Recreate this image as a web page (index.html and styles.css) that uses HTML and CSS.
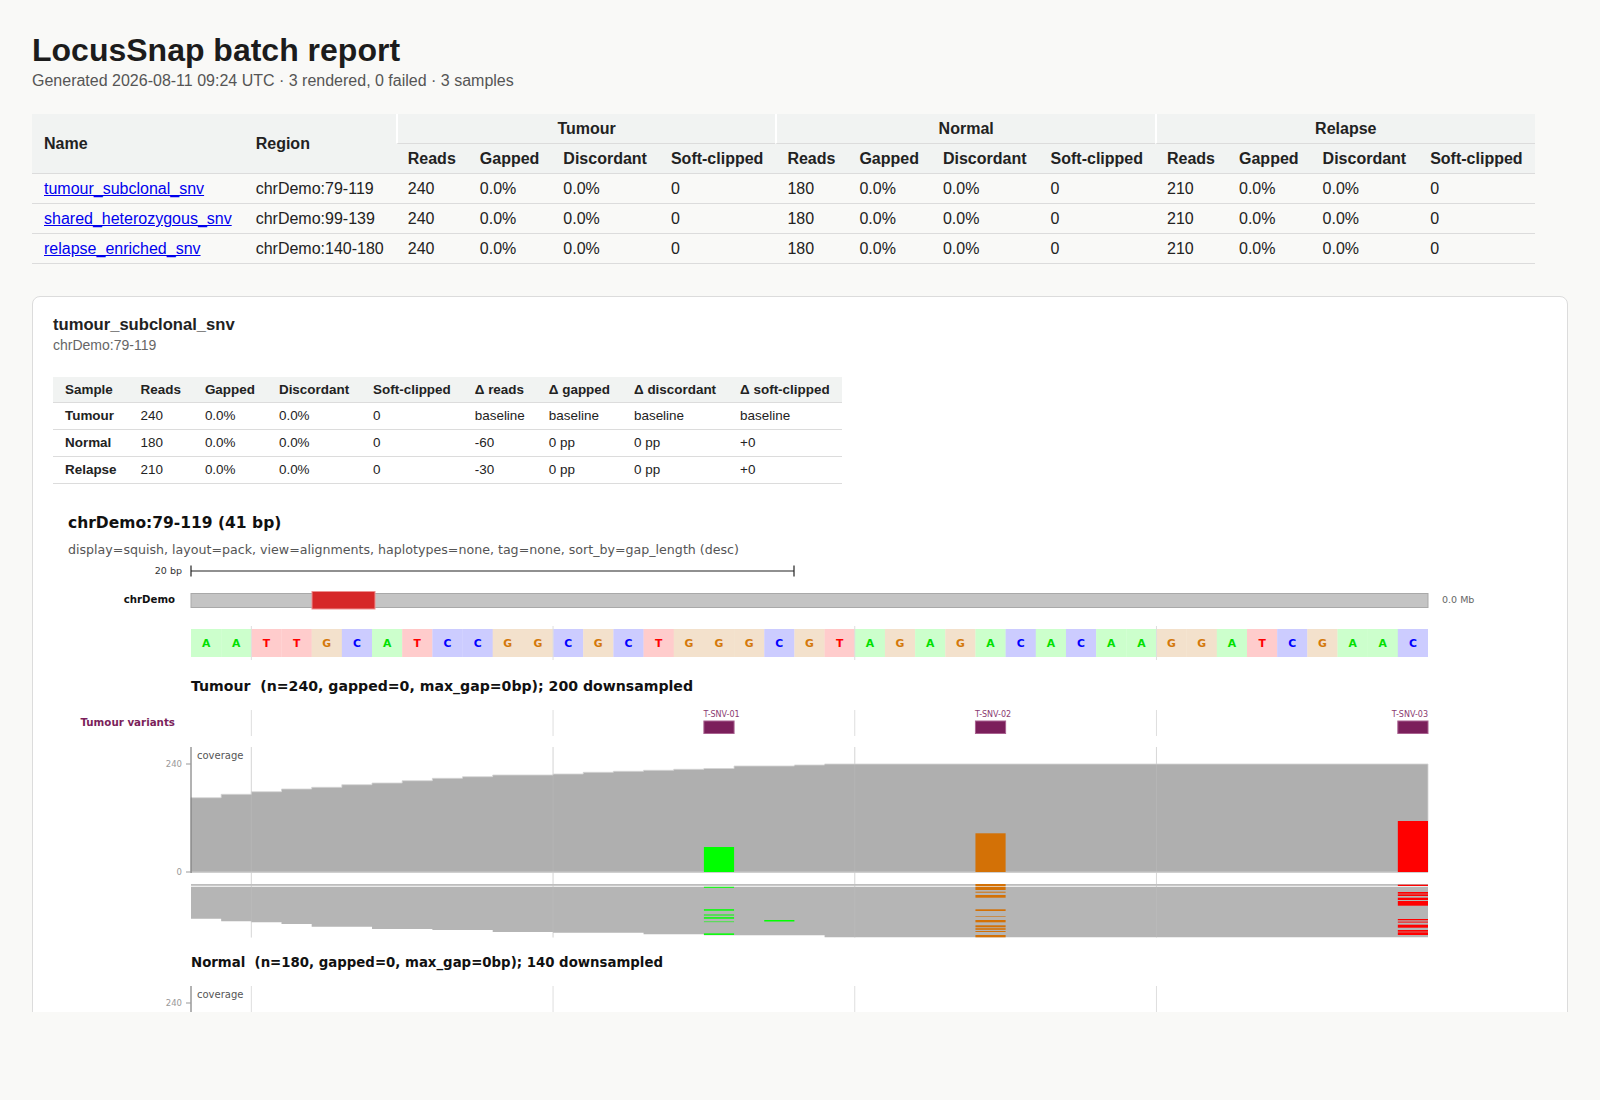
FILE: index.html
```html
<!DOCTYPE html>
<html lang="en">
<head>
<meta charset="utf-8">
<title>LocusSnap batch report</title>
<link rel="stylesheet" href="styles.css">
</head>
<body>
<div class="page">
  <h1>LocusSnap batch report</h1>
  <p class="meta">Generated 2026-08-11 09:24 UTC · 3 rendered, 0 failed · 3 samples</p>

  <table class="summary">
    <thead>
      <tr>
        <th rowspan="2">Name</th>
        <th rowspan="2">Region</th>
        <th colspan="4" class="grp">Tumour</th>
        <th colspan="4" class="grp">Normal</th>
        <th colspan="4" class="grp">Relapse</th>
      </tr>
      <tr>
        <th>Reads</th><th>Gapped</th><th>Discordant</th><th>Soft-clipped</th>
        <th>Reads</th><th>Gapped</th><th>Discordant</th><th>Soft-clipped</th>
        <th>Reads</th><th>Gapped</th><th>Discordant</th><th>Soft-clipped</th>
      </tr>
    </thead>
    <tbody>
      <tr>
        <td><a href="#tumour_subclonal_snv">tumour_subclonal_snv</a></td><td>chrDemo:79-119</td>
        <td>240</td><td>0.0%</td><td>0.0%</td><td>0</td>
        <td>180</td><td>0.0%</td><td>0.0%</td><td>0</td>
        <td>210</td><td>0.0%</td><td>0.0%</td><td>0</td>
      </tr>
      <tr>
        <td><a href="#shared_heterozygous_snv">shared_heterozygous_snv</a></td><td>chrDemo:99-139</td>
        <td>240</td><td>0.0%</td><td>0.0%</td><td>0</td>
        <td>180</td><td>0.0%</td><td>0.0%</td><td>0</td>
        <td>210</td><td>0.0%</td><td>0.0%</td><td>0</td>
      </tr>
      <tr>
        <td><a href="#relapse_enriched_snv">relapse_enriched_snv</a></td><td>chrDemo:140-180</td>
        <td>240</td><td>0.0%</td><td>0.0%</td><td>0</td>
        <td>180</td><td>0.0%</td><td>0.0%</td><td>0</td>
        <td>210</td><td>0.0%</td><td>0.0%</td><td>0</td>
      </tr>
    </tbody>
  </table>

  <section class="card" id="tumour_subclonal_snv">
    <h2>tumour_subclonal_snv</h2>
    <p class="region">chrDemo:79-119</p>

    <table class="cmp">
      <thead>
        <tr>
          <th>Sample</th><th>Reads</th><th>Gapped</th><th>Discordant</th><th>Soft-clipped</th>
          <th>Δ reads</th><th>Δ gapped</th><th>Δ discordant</th><th>Δ soft-clipped</th>
        </tr>
      </thead>
      <tbody>
        <tr><td class="s">Tumour</td><td>240</td><td>0.0%</td><td>0.0%</td><td>0</td><td>baseline</td><td>baseline</td><td>baseline</td><td>baseline</td></tr>
        <tr><td class="s">Normal</td><td>180</td><td>0.0%</td><td>0.0%</td><td>0</td><td>-60</td><td>0 pp</td><td>0 pp</td><td>+0</td></tr>
        <tr><td class="s">Relapse</td><td>210</td><td>0.0%</td><td>0.0%</td><td>0</td><td>-30</td><td>0 pp</td><td>0 pp</td><td>+0</td></tr>
      </tbody>
    </table>

    <svg class="locus" viewBox="53 497 1494 560" width="1494" height="560" xmlns="http://www.w3.org/2000/svg">
      <text class="t-title" x="68" y="527.5">chrDemo:79-119 (41 bp)</text>
      <text class="t-params" x="68" y="553.5" textLength="671" lengthAdjust="spacingAndGlyphs">display=squish, layout=pack, view=alignments, haplotypes=none, tag=none, sort_by=gap_length (desc)</text>

      <!-- scale bar -->
      <text class="t-scale" x="182" y="574" text-anchor="end">20 bp</text>
      <line class="scale" x1="191" y1="571" x2="794" y2="571"/>
      <line class="scale" x1="191" y1="565.5" x2="191" y2="576.5"/>
      <line class="scale" x1="794" y1="565.5" x2="794" y2="576.5"/>

      <!-- ideogram -->
      <text class="t-chr" x="175" y="603" text-anchor="end">chrDemo</text>
      <rect class="ideo" x="191" y="593.5" width="1237" height="14"/>
      <rect class="ideo-hi" x="312" y="591.5" width="63" height="17.5"/>
      <text class="t-mb" x="1442" y="603">0.0 Mb</text>

      <!-- sequence -->
      <g class="seq">
        <rect class="bA" x="191.00" y="629" width="30.4" height="28"/>
        <rect class="bA" x="221.17" y="629" width="30.4" height="28"/>
        <rect class="bT" x="251.34" y="629" width="30.4" height="28"/>
        <rect class="bT" x="281.51" y="629" width="30.4" height="28"/>
        <rect class="bG" x="311.68" y="629" width="30.4" height="28"/>
        <rect class="bC" x="341.85" y="629" width="30.4" height="28"/>
        <rect class="bA" x="372.02" y="629" width="30.4" height="28"/>
        <rect class="bT" x="402.19" y="629" width="30.4" height="28"/>
        <rect class="bC" x="432.37" y="629" width="30.4" height="28"/>
        <rect class="bC" x="462.54" y="629" width="30.4" height="28"/>
        <rect class="bG" x="492.71" y="629" width="30.4" height="28"/>
        <rect class="bG" x="522.88" y="629" width="30.4" height="28"/>
        <rect class="bC" x="553.05" y="629" width="30.4" height="28"/>
        <rect class="bG" x="583.22" y="629" width="30.4" height="28"/>
        <rect class="bC" x="613.39" y="629" width="30.4" height="28"/>
        <rect class="bT" x="643.56" y="629" width="30.4" height="28"/>
        <rect class="bG" x="673.73" y="629" width="30.4" height="28"/>
        <rect class="bG" x="703.90" y="629" width="30.4" height="28"/>
        <rect class="bG" x="734.07" y="629" width="30.4" height="28"/>
        <rect class="bC" x="764.24" y="629" width="30.4" height="28"/>
        <rect class="bG" x="794.41" y="629" width="30.4" height="28"/>
        <rect class="bT" x="824.59" y="629" width="30.4" height="28"/>
        <rect class="bA" x="854.76" y="629" width="30.4" height="28"/>
        <rect class="bG" x="884.93" y="629" width="30.4" height="28"/>
        <rect class="bA" x="915.10" y="629" width="30.4" height="28"/>
        <rect class="bG" x="945.27" y="629" width="30.4" height="28"/>
        <rect class="bA" x="975.44" y="629" width="30.4" height="28"/>
        <rect class="bC" x="1005.61" y="629" width="30.4" height="28"/>
        <rect class="bA" x="1035.78" y="629" width="30.4" height="28"/>
        <rect class="bC" x="1065.95" y="629" width="30.4" height="28"/>
        <rect class="bA" x="1096.12" y="629" width="30.4" height="28"/>
        <rect class="bA" x="1126.29" y="629" width="30.4" height="28"/>
        <rect class="bG" x="1156.46" y="629" width="30.4" height="28"/>
        <rect class="bG" x="1186.63" y="629" width="30.4" height="28"/>
        <rect class="bA" x="1216.80" y="629" width="30.4" height="28"/>
        <rect class="bT" x="1246.98" y="629" width="30.4" height="28"/>
        <rect class="bC" x="1277.15" y="629" width="30.4" height="28"/>
        <rect class="bG" x="1307.32" y="629" width="30.4" height="28"/>
        <rect class="bA" x="1337.49" y="629" width="30.4" height="28"/>
        <rect class="bA" x="1367.66" y="629" width="30.4" height="28"/>
        <rect class="bC" x="1397.83" y="629" width="30.17" height="28"/>
      </g>
      <g class="grid">
        <line x1="251.34" y1="626" x2="251.34" y2="660"/>
        <line x1="553.05" y1="626" x2="553.05" y2="660"/>
        <line x1="854.76" y1="626" x2="854.76" y2="660"/>
        <line x1="1156.46" y1="626" x2="1156.46" y2="660"/>
      </g>
      <g class="seqtxt" text-anchor="middle">
        <text class="lA" x="206.09" y="647">A</text>
        <text class="lA" x="236.26" y="647">A</text>
        <text class="lT" x="266.43" y="647">T</text>
        <text class="lT" x="296.60" y="647">T</text>
        <text class="lG" x="326.77" y="647">G</text>
        <text class="lC" x="356.94" y="647">C</text>
        <text class="lA" x="387.11" y="647">A</text>
        <text class="lT" x="417.28" y="647">T</text>
        <text class="lC" x="447.46" y="647">C</text>
        <text class="lC" x="477.63" y="647">C</text>
        <text class="lG" x="507.80" y="647">G</text>
        <text class="lG" x="537.97" y="647">G</text>
        <text class="lC" x="568.14" y="647">C</text>
        <text class="lG" x="598.31" y="647">G</text>
        <text class="lC" x="628.48" y="647">C</text>
        <text class="lT" x="658.65" y="647">T</text>
        <text class="lG" x="688.82" y="647">G</text>
        <text class="lG" x="718.99" y="647">G</text>
        <text class="lG" x="749.16" y="647">G</text>
        <text class="lC" x="779.33" y="647">C</text>
        <text class="lG" x="809.50" y="647">G</text>
        <text class="lT" x="839.68" y="647">T</text>
        <text class="lA" x="869.85" y="647">A</text>
        <text class="lG" x="900.02" y="647">G</text>
        <text class="lA" x="930.19" y="647">A</text>
        <text class="lG" x="960.36" y="647">G</text>
        <text class="lA" x="990.53" y="647">A</text>
        <text class="lC" x="1020.70" y="647">C</text>
        <text class="lA" x="1050.87" y="647">A</text>
        <text class="lC" x="1081.04" y="647">C</text>
        <text class="lA" x="1111.21" y="647">A</text>
        <text class="lA" x="1141.38" y="647">A</text>
        <text class="lG" x="1171.55" y="647">G</text>
        <text class="lG" x="1201.72" y="647">G</text>
        <text class="lA" x="1231.89" y="647">A</text>
        <text class="lT" x="1262.07" y="647">T</text>
        <text class="lC" x="1292.24" y="647">C</text>
        <text class="lG" x="1322.41" y="647">G</text>
        <text class="lA" x="1352.58" y="647">A</text>
        <text class="lA" x="1382.75" y="647">A</text>
        <text class="lC" x="1412.92" y="647">C</text>
      </g>

      <!-- Tumour track -->
      <text class="t-track" x="191" y="691" textLength="502" lengthAdjust="spacingAndGlyphs">Tumour&#160; (n=240, gapped=0, max_gap=0bp); 200 downsampled</text>

      <text class="t-var" x="175" y="726" text-anchor="end">Tumour variants</text>
      <g class="grid">
        <line x1="251.34" y1="710" x2="251.34" y2="736"/>
        <line x1="553.05" y1="710" x2="553.05" y2="736"/>
        <line x1="854.76" y1="710" x2="854.76" y2="736"/>
        <line x1="1156.46" y1="710" x2="1156.46" y2="736"/>
      </g>
      <text class="t-vlab" x="703.5" y="717">T-SNV-01</text>
      <rect class="vbox" x="703.9" y="721" width="30.17" height="12.5"/>
      <text class="t-vlab" x="975" y="717">T-SNV-02</text>
      <rect class="vbox" x="975.44" y="721" width="30.17" height="12.5"/>
      <text class="t-vlab" x="1428" y="717" text-anchor="end">T-SNV-03</text>
      <rect class="vbox" x="1397.83" y="721" width="30.17" height="12.5"/>

      <g class="grid">
        <line x1="251.34" y1="747" x2="251.34" y2="937.5"/>
        <line x1="553.05" y1="747" x2="553.05" y2="937.5"/>
        <line x1="854.76" y1="747" x2="854.76" y2="937.5"/>
        <line x1="1156.46" y1="747" x2="1156.46" y2="937.5"/>
      </g>
      <path class="cov" d="M191,872 V797.7 H221.17 V794.3 H251.34 V791.7 H281.51 V789 H311.68 V787.3 H341.85 V784.7 H372.02 V783 H402.19 V780.7 H432.37 V778.3 H462.54 V776.7 H492.71 V775 H553.05 V774 H583.22 V772.3 H613.39 V771.3 H643.56 V770.3 H673.73 V769.3 H703.9 V768.5 H734.07 V766 H794.41 V765 H824.59 V764 H1428 V872 Z"/>
      <rect class="mA" x="703.9" y="847" width="30.17" height="25"/>
      <rect class="mG" x="975.44" y="833.3" width="30.17" height="38.7"/>
      <rect class="mT" x="1397.83" y="821" width="30.17" height="51"/>
      <line class="covbase" x1="191" y1="872.5" x2="1428" y2="872.5"/>

      <line class="axis" x1="191" y1="747" x2="191" y2="873"/>
      <line class="tick" x1="186" y1="764" x2="191" y2="764"/>
      <line class="tick" x1="186" y1="872" x2="191" y2="872"/>
      <text class="t-axis" x="182" y="767" text-anchor="end">240</text>
      <text class="t-axis" x="182" y="875" text-anchor="end">0</text>
      <text class="t-cov" x="197" y="758.5">coverage</text>

      <!-- reads -->
      <rect class="rsep" x="191" y="884" width="1237" height="1.8"/>
      <path class="reads" d="M191,886.7 H1428 V937.3 H824.59 V935.3 H703.9 V934.3 H643.56 V932.7 H553.05 V932 H492.71 V930 H432.37 V929 H372.02 V926.7 H311.68 V924 H281.51 V922.3 H251.34 V921.3 H221.17 V918.7 H191 Z"/>
      <g class="mA">
        <rect x="703.9" y="886.8" width="30.17" height="1"/>
        <rect x="703.9" y="909.2" width="30.17" height="1.5"/>
        <rect x="703.9" y="914.5" width="30.17" height="1"/>
        <rect x="703.9" y="917.2" width="30.17" height="1.5"/>
        <rect x="703.9" y="921.2" width="30.17" height="1" opacity="0.6"/>
        <rect x="703.9" y="933.4" width="30.17" height="1.5"/>
        <rect x="764.24" y="920" width="30.17" height="1.5"/>
      </g>
      <g class="mG">
        <rect x="975.44" y="884" width="30.17" height="2"/>
        <rect x="975.44" y="886.7" width="30.17" height="3.3"/>
        <rect x="975.44" y="891.7" width="30.17" height="1"/>
        <rect x="975.44" y="895" width="30.17" height="2.7"/>
        <rect x="975.44" y="909.3" width="30.17" height="1.7"/>
        <rect x="975.44" y="916" width="30.17" height="1" opacity="0.6"/>
        <rect x="975.44" y="920" width="30.17" height="2.3"/>
        <rect x="975.44" y="925.3" width="30.17" height="2"/>
        <rect x="975.44" y="928" width="30.17" height="2" opacity="0.8"/>
        <rect x="975.44" y="931" width="30.17" height="1"/>
        <rect x="975.44" y="935" width="30.17" height="2.3"/>
      </g>
      <g class="mT">
        <rect x="1397.83" y="884.7" width="30.17" height="1.3"/>
        <rect x="1397.83" y="892" width="30.17" height="1.7"/>
        <rect x="1397.83" y="894.3" width="30.17" height="1.7"/>
        <rect x="1397.83" y="897.7" width="30.17" height="2.3"/>
        <rect x="1397.83" y="901" width="30.17" height="4.7"/>
        <rect x="1397.83" y="919" width="30.17" height="1.3"/>
        <rect x="1397.83" y="921.3" width="30.17" height="1.7" opacity="0.6"/>
        <rect x="1397.83" y="924.7" width="30.17" height="3"/>
        <rect x="1397.83" y="930" width="30.17" height="1.7"/>
        <rect x="1397.83" y="932.3" width="30.17" height="2.7"/>
      </g>
      <g class="grid-over">
        <line x1="251.34" y1="747" x2="251.34" y2="937.5"/>
        <line x1="553.05" y1="747" x2="553.05" y2="937.5"/>
        <line x1="854.76" y1="747" x2="854.76" y2="937.5"/>
        <line x1="1156.46" y1="747" x2="1156.46" y2="937.5"/>
      </g>

      <!-- Normal track -->
      <text class="t-track" x="191" y="967" textLength="472" lengthAdjust="spacingAndGlyphs">Normal&#160; (n=180, gapped=0, max_gap=0bp); 140 downsampled</text>
      <g class="grid">
        <line x1="251.34" y1="986" x2="251.34" y2="1057"/>
        <line x1="553.05" y1="986" x2="553.05" y2="1057"/>
        <line x1="854.76" y1="986" x2="854.76" y2="1057"/>
        <line x1="1156.46" y1="986" x2="1156.46" y2="1057"/>
      </g>
      <line class="axis" x1="191" y1="986" x2="191" y2="1057"/>
      <line class="tick" x1="186" y1="1003" x2="191" y2="1003"/>
      <text class="t-axis" x="182" y="1006" text-anchor="end">240</text>
      <text class="t-cov" x="197" y="997.5">coverage</text>
    </svg>
  </section>
</div>
</body>
</html>
```

FILE: styles.css
```css
html, body {
  margin: 0;
  padding: 0;
}

body {
  background: #f9f9f7;
  color: #222;
  font-family: "Liberation Sans", Arial, Helvetica, sans-serif;
}

.page {
  box-sizing: border-box;
  height: 1012px;
  overflow: hidden;
  padding: 32px 32px 0;
}

h1 {
  margin: 0;
  font-size: 32px;
  line-height: 37px;
  font-weight: bold;
  color: #1c1c1c;
}

.meta {
  margin: 3px 0 0;
  font-size: 16px;
  line-height: 18px;
  color: #555;
}

/* summary table */
.summary {
  margin-top: 24px;
  border-collapse: separate;
  border-spacing: 0;
  font-size: 16px;
}

.summary th,
.summary td {
  padding: 6px 12px;
  line-height: 17px;
  text-align: left;
  white-space: nowrap;
  border-bottom: 1px solid #dcdcdc;
}

.summary th {
  background: #f1f3f2;
  color: #222;
}

.summary th.grp {
  text-align: center;
  border-left: 2px solid #fff;
}

.summary td {
  color: #222;
}

.summary a {
  color: #0000ee;
  text-decoration: underline;
}

/* card */
.card {
  margin-top: 32px;
  background: #fff;
  border: 1px solid #dcdcdc;
  border-radius: 8px;
  padding: 18px 20px 16px;
}

.card h2 {
  margin: 0;
  font-size: 16.6px;
  line-height: 19px;
  font-weight: bold;
  color: #222;
}

.region {
  margin: 3px 0 0;
  font-size: 14px;
  line-height: 16px;
  color: #666;
}

.cmp {
  margin-top: 24px;
  border-collapse: separate;
  border-spacing: 0;
  font-size: 13.45px;
}

.cmp th,
.cmp td {
  padding: 6px 12px;
  line-height: 14px;
  text-align: left;
  white-space: nowrap;
  border-bottom: 1px solid #dcdcdc;
}

.cmp th {
  padding-top: 5.5px;
  padding-bottom: 5.5px;
  background: #f1f3f2;
  color: #222;
}

.cmp td.s {
  font-weight: bold;
}

/* locus figure */
.locus {
  display: block;
  margin-top: 13px;
  font-family: "DejaVu Sans", sans-serif;
}

.t-title {
  font-size: 15.5px;
  font-weight: bold;
  fill: #111;
}

.t-params {
  font-size: 12.5px;
  fill: #555;
}

.t-scale {
  font-size: 9.5px;
  fill: #333;
}

.scale {
  stroke: #222;
  stroke-width: 1.2;
}

.t-chr {
  font-size: 10.2px;
  font-weight: bold;
  fill: #111;
}

.ideo {
  fill: #c4c4c4;
  stroke: #a9a9a9;
  stroke-width: 1;
}

.ideo-hi {
  fill: #d62728;
  stroke: #ee9090;
  stroke-width: 1;
}

.t-mb {
  font-size: 9.5px;
  fill: #666;
}

.bA { fill: #ccffcc; }
.bT { fill: #ffcccc; }
.bG { fill: #f3e1cc; }
.bC { fill: #ccccff; }

.seqtxt text {
  font-size: 10.8px;
  font-weight: bold;
}

.lA { fill: #00e000; }
.lT { fill: #ff0000; }
.lG { fill: #d4780a; }
.lC { fill: #0000ff; }

.grid line {
  stroke: #dedede;
  stroke-width: 1;
}

.grid-over line {
  stroke: #c8c8c8;
  stroke-width: 1;
  opacity: 0.25;
}

.t-track {
  font-size: 14px;
  font-weight: bold;
  fill: #111;
  white-space: pre;
}

.t-var {
  font-size: 10.3px;
  font-weight: bold;
  fill: #7b1f5b;
}

.t-vlab {
  font-size: 8px;
  fill: #8a3a70;
}

.vbox {
  fill: #7b1f5b;
  stroke: #a8618f;
  stroke-width: 1;
}

.cov {
  fill: #afafaf;
  stroke: #d4d4d4;
  stroke-width: 0.8;
}

.mA { fill: #00ff00; }
.mG { fill: #d37106; }
.mT { fill: #ff0000; }

.covbase {
  stroke: #cfcfcf;
  stroke-width: 1;
}

.axis {
  stroke: #666;
  stroke-width: 1;
}

.tick {
  stroke: #999;
  stroke-width: 1;
}

.t-axis {
  font-size: 8.5px;
  fill: #999;
}

.t-cov {
  font-size: 10px;
  fill: #555;
}

.rsep {
  fill: #bdbdbd;
}

.reads {
  fill: #b5b5b5;
}
```
